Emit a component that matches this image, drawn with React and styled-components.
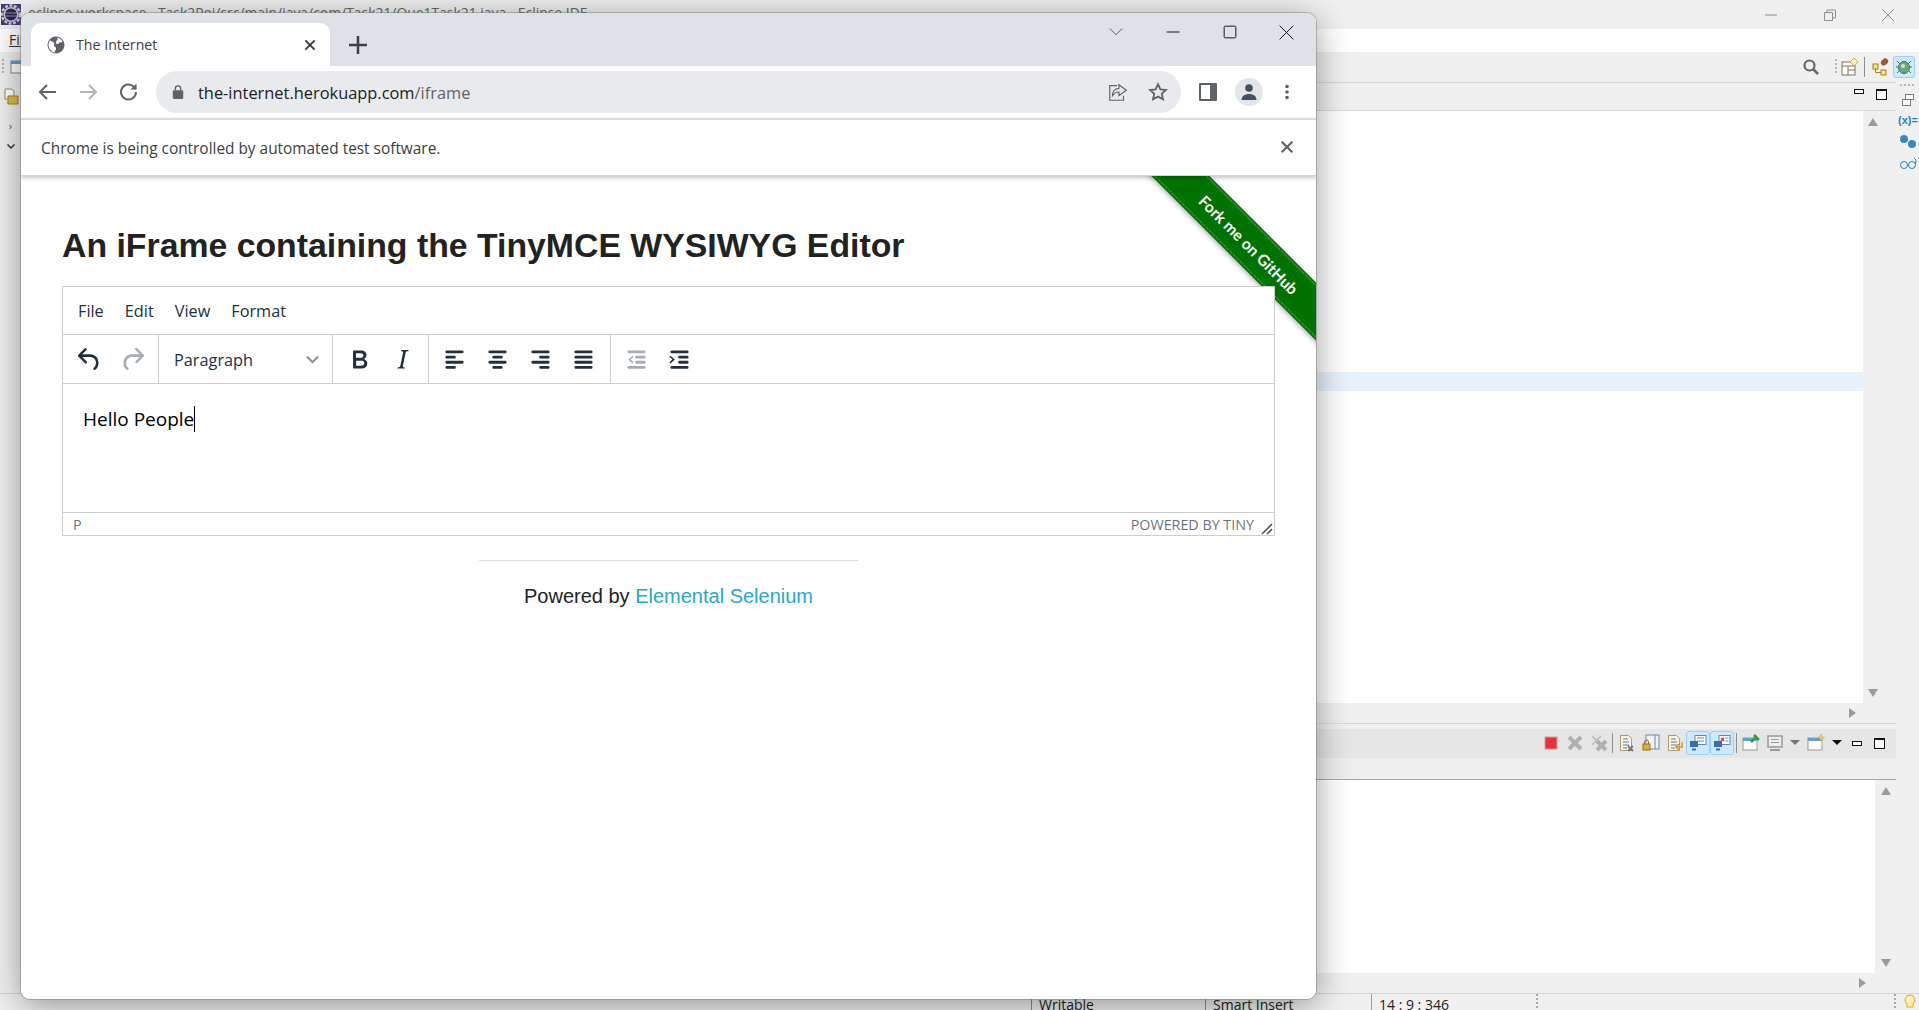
import React from 'react'
import styled, { createGlobalStyle } from 'styled-components'

const GlobalStyle = createGlobalStyle`
  html, body { margin: 0; padding: 0; background: #f0f0f0; }
  body { font-family: "Open Sans", "Noto Sans", sans-serif; overflow: hidden; }
  * { box-sizing: border-box; }
`

const uiFont = `"Open Sans", "Noto Sans", sans-serif`

// ---------- eclipse behind the browser ----------

const Desktop = styled.div`
  position: relative;
  width: 1919px;
  height: 1010px;
  overflow: hidden;
  display: flex;
  flex-direction: column;
  background: #f0f0f0;
`

const EclipseTitle = styled.div`
  height: 29px;
  flex: none;
  display: flex;
  background: #f0f0f0;
  position: relative;
`
const Logo = styled.svg`
  width: 20px;
  height: 21px;
  margin: 4px 0 0 1px;
  flex: none;
`
const TitleText = styled.span`
  margin: 3px 0 0 7px;
  font-size: 13.9px;
  line-height: 20px;
  color: #666;
  white-space: nowrap;
`
const WinControls = styled.div`
  margin-left: auto;
  display: flex;
  align-items: center;
  height: 29px;
  padding-right: 24px;
  gap: 44.5px;
  svg { width: 14px; height: 14px; fill: none; stroke: #8e8e8e; stroke-width: 1; }
`
const EclipseMenu = styled.div`
  height: 23px;
  flex: none;
  background: #fff;
  padding-left: 9px;
  font-size: 14px;
  line-height: 22px;
  color: #333;
  overflow: hidden;
  span { text-decoration: underline; }
`
const EclipseToolbar = styled.div`
  height: 30px;
  flex: none;
  display: flex;
  align-items: center;
  background: #f0f0f0;
  padding: 0 4px 0 2px;
`
const Grip = styled.i`
  display: block;
  width: 2px;
  height: 16px;
  margin-right: ${p => p.$gap || 6}px;
  background: repeating-linear-gradient(to bottom, #b5b5b5 0 2px, transparent 2px 4px);
`
const ToolIcon = styled.svg`
  width: ${p => p.$size || 18}px;
  height: ${p => p.$size || 18}px;
  flex: none;
  display: block;
`
const SearchIcon = styled(ToolIcon)`
  margin-right: 15px;
`
const JavaIcon = styled(ToolIcon)`
  margin-left: 2px;
`
const BulbIcon = styled(ToolIcon)`
  margin-left: 6px;
`
const Spring = styled.div`
  flex: 1;
`
const DebugToggle = styled.div`
  width: 22px;
  height: 22px;
  display: flex;
  align-items: center;
  justify-content: center;
  background: #cde8ff;
  border: 1px solid #99d1ff;
  border-radius: 3px;
  margin-left: 3px;
`
const ToolSep = styled.i`
  display: block;
  width: 1px;
  height: 20px;
  background: #8d8d8d;
  margin: 0 ${p => p.$space || 0}px;
`
const Workbench = styled.div`
  flex: 1;
  min-height: 0;
  display: flex;
`
const LeftTrim = styled.div`
  width: 21px;
  flex: none;
  display: flex;
  flex-direction: column;
  align-items: center;
  padding-top: 6px;
  color: #555;
  font-size: 11px;
  gap: 8px;
`
const TrimCaret = styled.span`
  margin-top: 4px;
`
const TrimChevron = styled.svg`
  width: 10px;
  height: 8px;
  margin-top: 2px;
`
const Panels = styled.div`
  flex: 1;
  min-width: 0;
  display: flex;
  flex-direction: column;
`
const UpperPanel = styled.section`
  height: 642px;
  flex: none;
  display: flex;
  flex-direction: column;
  border-top: 1px solid #d9d9d9;
  border-bottom: 1px solid #d9d9d9;
`
const PanelHead = styled.div`
  height: 28px;
  flex: none;
  display: flex;
  justify-content: flex-end;
  gap: 12px;
  padding: 5px 9px 0 0;
  border-bottom: 1px solid #d9d9d9;
`
const MinBox = styled.i`
  display: block;
  width: 10px;
  height: 5px;
  margin-top: 1px;
  border: 1px solid #111;
  background: #fff;
`
const MaxBox = styled.i`
  display: block;
  width: 11px;
  height: 11px;
  margin-top: 1px;
  border: 1px solid #111;
  border-top-width: 2px;
  background: #fff;
`
const PanelBody = styled.div`
  flex: 1;
  min-height: 0;
  display: flex;
`
const EditorArea = styled.div`
  flex: 1;
  background: #fff;
  padding-top: 261px;
`
const CurrentLine = styled.div`
  height: 19px;
  background: #e8f2fe;
`
const VScroll = styled.div`
  width: ${p => p.$w}px;
  flex: none;
  display: flex;
  flex-direction: column;
  justify-content: space-between;
  align-items: center;
  padding: 7px 0 ${p => p.$pb || 8}px;
  background: #f0f0f0;
  margin-right: ${p => p.$mr || 0}px;
`
const Arrow = styled.i`
  display: block;
  width: 0;
  height: 0;
  border-left: 5px solid transparent;
  border-right: 5px solid transparent;
  ${p => (p.$down ? 'border-top: 8px solid #9b9b9b;' : 'border-bottom: 8px solid #9b9b9b;')}
`
const HScroll = styled.div`
  height: ${p => p.$h}px;
  flex: none;
  display: flex;
  align-items: center;
  justify-content: flex-end;
  padding-right: ${p => p.$pr}px;
  background: #f0f0f0;
  i {
    display: block;
    width: 0;
    height: 0;
    border-top: 5px solid transparent;
    border-bottom: 5px solid transparent;
    border-left: 7px solid #9b9b9b;
  }
`
const LowerPanel = styled.section`
  flex: 1;
  margin-top: 5px;
  display: flex;
  flex-direction: column;
  min-height: 0;
`
const ConsoleBar = styled.div`
  height: 29px;
  flex: none;
  display: flex;
  align-items: center;
  justify-content: flex-end;
  padding: 0 5px 2px 0;
  background: #e6e6e6;
`
const ConsoleCell = styled.div`
  width: ${p => p.$w || 24}px;
  height: 24px;
  flex: none;
  display: flex;
  align-items: center;
  justify-content: center;
  ${p => p.$on && 'background: #cde8ff; border: 1px solid #99d1ff; border-radius: 3px;'}
`
const DropArrow = styled.i`
  display: block;
  width: 0;
  height: 0;
  border-left: 5px solid transparent;
  border-right: 5px solid transparent;
  border-top: 5px solid ${p => p.$color || '#111'};
`
const ConsoleTabs = styled.div`
  height: 22px;
  flex: none;
  background: #eeeeee;
  border-bottom: 1px solid #a8a8a8;
`
const ConsoleBody = styled.div`
  flex: 1;
  min-height: 0;
  display: flex;
`
const RightTrim = styled.div`
  width: 22px;
  flex: none;
  display: flex;
  flex-direction: column;
  align-items: center;
  gap: 5px;
  padding-top: 2px;
  font-size: 11px;
  color: #2a7fc1;
  margin-left: 1px;
  b { font-weight: 600; line-height: 16px; font-family: "Liberation Sans", sans-serif; }
`
const TrimDots = styled.i`
  display: block;
  width: 16px;
  height: 2px;
  margin-bottom: 2px;
  background: repeating-linear-gradient(to right, #b5b5b5 0 2px, transparent 2px 4px);
`
const StatusBar = styled.footer`
  height: 17px;
  flex: none;
  display: flex;
  border-top: 1px solid #d4d4d4;
  font-size: 14px;
  line-height: 22px;
  color: #222;
  overflow: hidden;
  background: #f0f0f0;
`
const StatusCell = styled.div`
  width: ${p => p.$w}px;
  flex: none;
  padding-left: ${p => p.$pl || 7}px;
  border-left: 1px solid ${p => p.$line || 'transparent'};
  white-space: nowrap;
`
const StatusGrip = styled.i`
  display: block;
  width: 2px;
  flex: none;
  margin-left: ${p => p.$ml}px;
  background: repeating-linear-gradient(to bottom, #a8a8a8 0 2px, transparent 2px 4px);
`

// ---------- browser window ----------

const BrowserWindow = styled.div`
  position: absolute;
  left: 21px;
  top: 13px;
  width: 1295px;
  height: 986px;
  display: flex;
  flex-direction: column;
  background: #fff;
  border-radius: 9px;
  overflow: hidden;
  box-shadow: 0 0 0 1px rgba(120, 120, 120, .45), 0 6px 34px rgba(0, 0, 0, .4);
  z-index: 5;
`
const TabStrip = styled.div`
  height: 53px;
  flex: none;
  display: flex;
  background: #dee1e6;
  padding-left: 10px;
`
const Tab = styled.div`
  width: 299px;
  height: 43px;
  margin-top: 10px;
  display: flex;
  align-items: center;
  padding: 0 12px 0 16px;
  background: #fff;
  border-radius: 10px 10px 0 0;
  font-size: 14.2px;
  color: #3c4043;
`
const TabLabel = styled.span`
  margin-left: 11px;
  flex: 1;
`
const Icon = styled.svg`
  width: ${p => p.$size || 24}px;
  height: ${p => p.$size || 24}px;
  display: block;
  flex: none;
`
const NewTab = styled.div`
  width: 34px;
  height: 34px;
  margin: 15px 0 0 11px;
  display: flex;
  align-items: center;
  justify-content: center;
`
const FrameButtons = styled.div`
  margin-left: auto;
  display: flex;
  align-items: center;
  height: 38px;
  padding-right: 22px;
  gap: 42.5px;
`
const Omnibar = styled.div`
  height: 52px;
  flex: none;
  display: flex;
  align-items: center;
  padding: 0 16px 0 15px;
`
const NavButton = styled.div`
  width: 24px;
  height: 24px;
  margin-right: ${p => p.$mr || 16}px;
  display: flex;
  align-items: center;
  justify-content: center;
`
const AddressBar = styled.div`
  width: 1025px;
  height: 42px;
  margin: 0 18px 0 0;
  display: flex;
  align-items: center;
  padding: 0 12px 0 15px;
  background: #e8eaed;
  border-radius: 21px;
  font-size: 16.4px;
  color: #202124;
`
const Url = styled.span`
  margin-left: 13px;
  flex: 1;
  white-space: nowrap;
  em { font-style: normal; color: #5f6368; }
`
const AddressActions = styled.div`
  display: flex;
  gap: 18px;
  align-items: center;
`
const ProfileCircle = styled.div`
  width: 28px;
  height: 28px;
  margin: 0 16px 0 18px;
  display: flex;
  align-items: center;
  justify-content: center;
  border-radius: 50%;
  background: #e3e5e9;
`
const InfoBar = styled.div`
  height: 58px;
  flex: none;
  display: flex;
  align-items: center;
  justify-content: space-between;
  padding: 2px 21px 0 20px;
  border-top: 2px solid #dadce0;
  border-bottom: 1px solid #d5d5d5;
  box-shadow: 0 2px 4px rgba(0, 0, 0, .22);
  font-size: 15.4px;
  color: #3c4043;
  position: relative;
  z-index: 3;
`
const InfoClose = styled.div`
  margin-bottom: 4px;
`
const Page = styled.main`
  position: relative;
  flex: 1;
  min-height: 0;
  overflow: hidden;
  padding: 0 41px;
  background: #fff;
`
const Ribbon = styled.a`
  position: absolute;
  left: 1078px;
  top: 50px;
  width: 300px;
  height: 37px;
  display: flex;
  align-items: center;
  justify-content: center;
  transform: rotate(45deg);
  background: #007200;
  border-top: 1px dotted #5fa85f;
  border-bottom: 1px dotted #5fa85f;
  outline: 2px solid #007200;
  box-shadow: 0 2px 6px rgba(0, 0, 0, .5);
  color: #fff;
  font-family: Lato, sans-serif;
  font-size: 15.6px;
  font-weight: 700;
  white-space: nowrap;
`
const Heading = styled.h3`
  margin: 0;
  padding-top: 48px;
  height: 110px;
  font-family: "Liberation Sans", Arial, sans-serif;
  font-size: 33.8px;
  line-height: 42px;
  font-weight: 700;
  color: #222;
`
const Editor = styled.div`
  position: relative;
  z-index: 1;
  height: 250px;
  display: flex;
  flex-direction: column;
  background: #fff;
  border: 1px solid #ccc;
  font-family: ${uiFont};
`
const MenuBar = styled.div`
  height: 48px;
  flex: none;
  display: flex;
  align-items: center;
  padding: 1px 0 0 15px;
  gap: 21px;
  border-bottom: 1px solid #ccc;
  font-size: 16.3px;
  color: #222f3e;
`
const FormatBar = styled.div`
  height: 49px;
  flex: none;
  display: flex;
  border-bottom: 1px solid #ccc;
`
const ToolGroup = styled.div`
  display: flex;
  align-items: center;
  padding: 0 ${p => p.$pr || 4}px 0 ${p => p.$pl || 5}px;
  border-right: ${p => (p.$last ? '0' : '1px solid #ccc')};
`
const ToolButton = styled.div`
  width: 43px;
  height: 43px;
  display: flex;
  align-items: center;
  justify-content: center;
  svg { fill: ${p => (p.$off ? 'rgba(34, 47, 62, .4)' : '#222f3e')}; }
`
const SelectBox = styled.div`
  width: 174px;
  height: 100%;
  display: flex;
  align-items: center;
  justify-content: space-between;
  padding: 2px 12px 0 15px;
  border-right: 1px solid #ccc;
  font-size: 16.3px;
  color: #222f3e;
  svg { fill: rgba(34, 47, 62, .55); }
`
const Content = styled.div`
  flex: 1;
  display: flex;
  align-items: flex-start;
  padding: 19px 0 0 20px;
  font-size: 19px;
  line-height: 32px;
  color: #000;
`
const Caret = styled.i`
  display: block;
  width: 1px;
  height: 26px;
  margin-top: 3px;
  background: #000;
`
const EditorStatus = styled.div`
  height: 23px;
  flex: none;
  display: flex;
  align-items: center;
  padding: 0 1px 0 10px;
  border-top: 1px solid #ccc;
  font-size: 14.3px;
  color: rgba(34, 47, 62, .7);
`
const Branding = styled.span`
  margin-left: auto;
  margin-right: 5px;
`
const ResizeHandle = styled.svg`
  width: 14px;
  height: 14px;
  align-self: flex-end;
  flex: none;
`
const PageFooter = styled.div`
  width: 379px;
  margin: 24px auto 0;
  padding-top: 22px;
  border-top: 1px solid #ddd;
  text-align: center;
  font-family: "Liberation Sans", Arial, sans-serif;
  font-size: 20px;
  line-height: 26px;
  color: #222;
  a { color: #2ba6cb; text-decoration: none; }
`

const alignLines = {
  left: [[5, 19], [5, 13], [5, 19], [5, 13]],
  center: [[5, 19], [8, 16], [5, 19], [8, 16]],
  right: [[5, 19], [11, 19], [5, 19], [11, 19]],
  justify: [[5, 19], [5, 19], [5, 19], [5, 19]],
}

const AlignIcon = ({ kind }) => (
  <Icon $size={31} viewBox="0 0 24 24">
    {alignLines[kind].map(([a, b], i) => (
      <rect key={i} x={a} y={5 + i * 4} width={b - a} height="2.2" rx="1" />
    ))}
  </Icon>
)

const IndentIcon = ({ out }) => (
  <Icon $size={31} viewBox="0 0 24 24">
    <rect x="5" y="5" width="14" height="2.2" rx="1" />
    <rect x="11" y="9" width="8" height="2.2" rx="1" />
    <rect x="11" y="13" width="8" height="2.2" rx="1" />
    <rect x="5" y="17" width="14" height="2.2" rx="1" />
    {out
      ? <path d="M9 9 5.6 12 9 15l.8-.9L7.5 12l2.300-2.100z" />
      : <path d="M5 9 8.4 12 5 15l-.8-.9L6.5 12 4.200 9.900z" />}
  </Icon>
)

const StrokeIcon = ({ size = 24, color = '#5f6368', w = 2, children }) => (
  <Icon $size={size} viewBox="0 0 24 24" fill="none" stroke={color} strokeWidth={w}>{children}</Icon>
)

const GrayCross = ({ double }) => (
  <ToolIcon viewBox="0 0 18 18">
    {double && <path d="M2 2 11 11M11 2 2 11" stroke="#c4c4c4" strokeWidth="2" fill="none" />}
    <path d={double ? 'M7 7 16 16M16 7 7 16' : 'M3 3 15 15M15 3 3 15'} stroke="#b0b0b0" strokeWidth="4" fill="none" />
  </ToolIcon>
)

const DocIcon = ({ children }) => (
  <ToolIcon viewBox="0 0 18 18">
    <path d="M2.5 1.5h8l3 3v12h-11z" fill="#fbf6e6" stroke="#a79a74" />
    <path d="M5 5h5M5 8h6M5 11h6M5 14h4" stroke="#5b79a8" fill="none" />
    {children}
  </ToolIcon>
)

const MonitorIcon = ({ red }) => (
  <ToolIcon viewBox="0 0 18 18">
    <rect x="6" y="1.5" width="11" height="9" fill="#fff" stroke="#5a86b8" />
    {red
      ? <path d="M8 4l3 3M11 4 8 7" stroke="#e03030" strokeWidth="1.6" fill="none" />
      : <path d="M8 4h7M8 7h7" stroke="#5a86b8" fill="none" />}
    {red && <path d="M12.5 4h3M12.5 7h3" stroke="#5a86b8" fill="none" />}
    <rect x="1" y="7" width="8" height="6" fill="#3a6ea5" />
    <path d="M3 15.5h4" stroke="#3a6ea5" strokeWidth="2" />
  </ToolIcon>
)

const WindowIcon = ({ children }) => (
  <ToolIcon viewBox="0 0 18 18">
    <rect x="1" y="4" width="14" height="12" fill="#fff" stroke="#9a9a8a" />
    <rect x="1" y="4" width="14" height="3" fill="#6a9bd1" />
    {children}
  </ToolIcon>
)

export default function App() {
  return (
    <Desktop>
      <GlobalStyle />

      <EclipseTitle>
        <Logo viewBox="0 0 20 21">
          <rect width="20" height="21" fill="#4a3a78" />
          <circle cx="10" cy="10.5" r="9" fill="none" stroke="#c8c8d0" strokeWidth="2.5" strokeDasharray="3 1.5" />
          <circle cx="10" cy="10.5" r="7.5" fill="#c8c8d0" />
          <circle cx="10" cy="10.5" r="6" fill="#2b2550" />
          <path d="M4 9h12M4 12h12" stroke="#8e86b5" />
        </Logo>
        <TitleText>eclipse-workspace - Task2Poj/src/main/java/com/Task21/Que1Task21.java - Eclipse IDE</TitleText>
        <WinControls>
          <svg viewBox="0 0 14 14"><path d="M1 7h12" /></svg>
          <svg viewBox="0 0 14 14"><path d="M1.5 4.5h8v8h-8zM4 4.5V2h8.5v8H9.5" /></svg>
          <svg viewBox="0 0 14 14"><path d="M1 1l12 12M13 1 1 13" /></svg>
        </WinControls>
      </EclipseTitle>

      <EclipseMenu><span>File</span></EclipseMenu>

      <EclipseToolbar>
        <Grip />
        <ToolIcon $size={14} viewBox="0 0 14 14">
          <rect x="1" y="1" width="12" height="12" fill="#fff" stroke="#7a8aa0" />
          <rect x="1" y="1" width="12" height="3" fill="#6a9bd1" />
        </ToolIcon>
        <Spring />
        <SearchIcon viewBox="0 0 18 18">
          <circle cx="7.5" cy="7.5" r="5" fill="none" stroke="#666" strokeWidth="2.2" />
          <path d="M11.5 11.5 16 16" stroke="#666" strokeWidth="2.5" />
        </SearchIcon>
        <Grip $gap={4} />
        <ToolIcon viewBox="0 0 18 18">
          <rect x="1" y="4" width="13" height="13" fill="#fff" stroke="#7f7456" />
          <path d="M1 8h13M7 8v9M7 12h7" stroke="#7f7456" fill="none" />
          <path d="M13 0l4 4-4 4-4-4z" fill="#fff4c8" stroke="#d6a72c" />
        </ToolIcon>
        <ToolSep $space={5} />
        <JavaIcon viewBox="0 0 18 18">
          <rect x="1" y="6" width="5" height="5" fill="#ffe27a" stroke="#a87f20" />
          <rect x="9" y="12" width="5" height="5" fill="#ffe27a" stroke="#a87f20" />
          <path d="M3.5 11v3.5H9" stroke="#a87f20" fill="none" />
          <ellipse cx="12.5" cy="4" rx="4" ry="3" fill="#9a5a34" transform="rotate(-40 12.5 4)" />
        </JavaIcon>
        <DebugToggle>
          <ToolIcon viewBox="0 0 18 18">
            <path d="M2 3l3 3M16 3l-3 3M1 9h3M14 9h3M2 15l3-3M16 15l-3-3" stroke="#4f6d3a" fill="none" />
            <ellipse cx="9" cy="9.5" rx="5.5" ry="6" fill="#6ea77a" stroke="#2f7a78" />
            <circle cx="8" cy="8" r="2" fill="#cfe8c4" />
          </ToolIcon>
        </DebugToggle>
      </EclipseToolbar>

      <Workbench>
        <LeftTrim>
          <ToolIcon viewBox="0 0 18 18">
            <path d="M3 1h7l2 2v8H3z" fill="#fff" stroke="#a08b5c" />
            <path d="M6 8h10v8H6z" fill="#e4b84e" stroke="#a37c20" />
          </ToolIcon>
          <TrimCaret>›</TrimCaret>
          <TrimChevron viewBox="0 0 10 8">
            <path d="M1.5 1.5 5 5l3.5-3.5" fill="none" stroke="#333" strokeWidth="1.5" />
          </TrimChevron>
        </LeftTrim>

        <Panels>
          <UpperPanel>
            <PanelHead><MinBox /><MaxBox /></PanelHead>
            <PanelBody>
              <EditorArea><CurrentLine /></EditorArea>
              <VScroll $w={20} $mr={13} $pb={6}><Arrow /><Arrow $down /></VScroll>
            </PanelBody>
            <HScroll $h={20} $pr={40}><i /></HScroll>
          </UpperPanel>

          <LowerPanel>
            <ConsoleBar>
              <ConsoleCell>
                <ToolIcon $size={14} viewBox="0 0 14 14"><rect x="1" y="1" width="12" height="12" fill="#e8303a" stroke="#c9a0a0" /></ToolIcon>
              </ConsoleCell>
              <ConsoleCell><GrayCross /></ConsoleCell>
              <ConsoleCell $w={23}><GrayCross double /></ConsoleCell>
              <ConsoleCell $w={5}><ToolSep /></ConsoleCell>
              <ConsoleCell><DocIcon><path d="M10 12l5 5M15 12l-5 5" stroke="#777" strokeWidth="1.8" /></DocIcon></ConsoleCell>
              <ConsoleCell>
                <ToolIcon viewBox="0 0 18 18">
                  <rect x="4" y="1" width="13" height="14" fill="#eef3f8" stroke="#6f88a8" />
                  <path d="M13 1v14" stroke="#6f88a8" />
                  <rect x="1" y="10" width="7" height="6" fill="#e0b03a" stroke="#96701a" />
                  <path d="M2.5 10V8a2 2 0 0 1 4 0v2" fill="none" stroke="#96701a" />
                </ToolIcon>
              </ConsoleCell>
              <ConsoleCell $w={23}><DocIcon><path d="M16 8v5h-5M13 10l-3 3 3 3" stroke="#d49a20" strokeWidth="1.5" fill="none" /></DocIcon></ConsoleCell>
              <ConsoleCell $on><MonitorIcon /></ConsoleCell>
              <ConsoleCell $on><MonitorIcon red /></ConsoleCell>
              <ConsoleCell $w={5}><ToolSep /></ConsoleCell>
              <ConsoleCell><WindowIcon><path d="M9 8l6-6M12 1l5 5" stroke="#2f9a3e" strokeWidth="2.5" fill="none" /></WindowIcon></ConsoleCell>
              <ConsoleCell>
                <ToolIcon viewBox="0 0 18 18">
                  <rect x="2" y="2" width="14" height="11" fill="#eee" stroke="#999" strokeWidth="1.5" />
                  <path d="M5 5.5h8M5 8.5h8" stroke="#999" />
                  <path d="M4 16h10" stroke="#999" strokeWidth="2" />
                </ToolIcon>
              </ConsoleCell>
              <ConsoleCell $w={16}><DropArrow $color="#777" /></ConsoleCell>
              <ConsoleCell $w={26}><WindowIcon><path d="M14 0l1 2.5 2.5 1-2.5 1-1 2.5-1-2.5-2.5-1 2.5-1z" fill="#f4d060" stroke="#c89a20" strokeWidth=".5" /></WindowIcon></ConsoleCell>
              <ConsoleCell $w={16}><DropArrow /></ConsoleCell>
              <ConsoleCell $w={23}><MinBox /></ConsoleCell>
              <ConsoleCell $w={23}><MaxBox /></ConsoleCell>
            </ConsoleBar>
            <ConsoleTabs />
            <ConsoleBody>
              <EditorArea />
              <VScroll $w={21} $mr={0} $pb={6}><Arrow /><Arrow $down /></VScroll>
            </ConsoleBody>
            <HScroll $h={20} $pr={30}><i /></HScroll>
          </LowerPanel>
        </Panels>

        <RightTrim>
          <TrimDots />
          <ToolIcon $size={14} viewBox="0 0 14 14">
            <rect x="4.5" y="1.5" width="8" height="5" fill="#fff" stroke="#85786a" />
            <rect x="1.5" y="6.5" width="8" height="6" fill="#fff" stroke="#85786a" />
          </ToolIcon>
          <b>(x)=</b>
          <ToolIcon viewBox="0 0 18 18">
            <circle cx="5" cy="6" r="4" fill="#3a85c6" />
            <circle cx="13" cy="11" r="4" fill="#3a85c6" />
          </ToolIcon>
          <ToolIcon viewBox="0 0 18 18">
            <circle cx="5" cy="9" r="3.5" fill="none" stroke="#2a7fc1" />
            <circle cx="13" cy="9" r="3.5" fill="none" stroke="#2a7fc1" />
            <path d="M8.5 9h1M16.5 8 17 4 15 2" fill="none" stroke="#2a7fc1" />
          </ToolIcon>
        </RightTrim>
      </Workbench>

      <StatusBar>
        <StatusCell $w={1031} />
        <StatusCell $w={174} $line="#8c8c8c">Writable</StatusCell>
        <StatusCell $w={166} $line="#8c8c8c">Smart Insert</StatusCell>
        <StatusCell $w={165} $line="#a0a0a0">14 : 9 : 346</StatusCell>
        <StatusGrip $ml={0} />
        <StatusGrip $ml={356} />
        <BulbIcon $size={16} viewBox="0 0 16 16">
          <path d="M8 1a5 5 0 0 0-3 9v3h6v-3a5 5 0 0 0-3-9z" fill="#fdf0b0" stroke="#e0a820" />
        </BulbIcon>
      </StatusBar>

      <BrowserWindow>
        <TabStrip>
          <Tab>
            <Icon $size={18} viewBox="0 0 18 18">
              <circle cx="9" cy="9" r="8.5" fill="#5f6368" />
              <path d="M3 4.5c2 .5 3 1 4 2.5s-1 2 0 3 2 1 2 2.5-1 2.5-1.5 4C5 16 2 13 1.5 10 1.3 8 2 6 3 4.5zM10.5 1.5c2 .5 4 2 5 4-1 1-2 .5-3 1s-1 2-2.500 1.500-1-2-.5-3 1.500-1.500 1-3.500z" fill="#fff" />
            </Icon>
            <TabLabel>The Internet</TabLabel>
            <StrokeIcon size={16} color="#3c4043" w={3}><path d="M5 5l14 14M19 5 5 19" /></StrokeIcon>
          </Tab>
          <NewTab>
            <StrokeIcon size={24} color="#3c4043" w={2.5}><path d="M12 3v18M3 12h18" /></StrokeIcon>
          </NewTab>
          <FrameButtons>
            <StrokeIcon size={16} color="#333" w={1.2}><path d="M3 7l9 9 9-9" /></StrokeIcon>
            <StrokeIcon size={14} color="#111" w={1.7}><path d="M1 12h22" /></StrokeIcon>
            <StrokeIcon size={14} color="#111" w={1.7}><rect x="2" y="2" width="20" height="20" rx="2" /></StrokeIcon>
            <StrokeIcon size={15} color="#111" w={1.6}><path d="M1 1l22 22M23 1 1 23" /></StrokeIcon>
          </FrameButtons>
        </TabStrip>

        <Omnibar>
          <NavButton><StrokeIcon><path d="M20 12H5M11 5l-7 7 7 7" /></StrokeIcon></NavButton>
          <NavButton $mr={17}><StrokeIcon color="#b3b5b8"><path d="M4 12h15M13 5l7 7-7 7" /></StrokeIcon></NavButton>
          <NavButton $mr={15}>
            <StrokeIcon>
              <path d="M19 12a7.5 7.5 0 1 1-2.2-5.3L19 9" />
              <path d="M19.5 3.5v6h-6" fill="#5f6368" stroke="none" />
            </StrokeIcon>
          </NavButton>
          <AddressBar>
            <Icon $size={14} viewBox="0 0 14 16">
              <rect x="1" y="6" width="12" height="10" rx="1.5" fill="#5f6368" />
              <path d="M4 6V4a3 3 0 0 1 6 0v2" fill="none" stroke="#5f6368" strokeWidth="1.6" />
            </Icon>
            <Url>the-internet.herokuapp.com<em>/iframe</em></Url>
            <AddressActions>
              <StrokeIcon size={22} w={1.3}>
                <path d="M11 5H3v16h15v-5" />
                <path d="M13 4v4C8 8 6 12 6 16c2-3 4-4 7-4v4l8-6z" />
              </StrokeIcon>
              <StrokeIcon size={22} w={2}>
                <path d="M12 3.5l2.6 5.6 6 .7-4.500 4.100 1.300 6L12 17l-5.400 2.900 1.300-6L3.400 9.800l6-.7z" />
              </StrokeIcon>
            </AddressActions>
          </AddressBar>
          <Icon $size={18} viewBox="0 0 18 18">
            <rect width="18" height="18" rx="1" fill="#5f6368" />
            <rect x="2" y="2" width="9" height="14" fill="#fff" />
          </Icon>
          <ProfileCircle>
            <Icon $size={18} viewBox="0 0 18 18">
              <circle cx="9" cy="5" r="3.8" fill="#45505e" />
              <path d="M1.5 17c0-4 3.5-6 7.5-6s7.5 2 7.5 6z" fill="#45505e" />
            </Icon>
          </ProfileCircle>
          <Icon $size={16} viewBox="0 0 16 16" fill="#5f6368">
            <circle cx="8" cy="2.5" r="1.8" />
            <circle cx="8" cy="8" r="1.8" />
            <circle cx="8" cy="13.5" r="1.8" />
          </Icon>
        </Omnibar>

        <InfoBar>
          <span>Chrome is being controlled by automated test software.</span>
          <InfoClose>
            <StrokeIcon size={16} w={3.2}><path d="M4 4l16 16M20 4 4 20" /></StrokeIcon>
          </InfoClose>
        </InfoBar>

        <Page>
          <Ribbon>Fork me on GitHub</Ribbon>
          <Heading>An iFrame containing the TinyMCE WYSIWYG Editor</Heading>
          <Editor>
            <MenuBar>
              <span>File</span>
              <span>Edit</span>
              <span>View</span>
              <span>Format</span>
            </MenuBar>
            <FormatBar>
              <ToolGroup>
                <ToolButton>
                  <Icon $size={31} viewBox="0 0 24 24"><path d="M6.4 8H12c3.7 0 6.2 2 6.8 5.1.6 2.7-.4 5.6-2.3 6.8a1 1 0 0 1-1-1.8c1.1-.6 1.8-2.7 1.4-4.6-.5-2.1-2.1-3.5-4.9-3.5H6.4l3.3 3.3a1 1 0 1 1-1.4 1.4l-5-5a1 1 0 0 1 0-1.4l5-5a1 1 0 0 1 1.4 1.4L6.4 8z" /></Icon>
                </ToolButton>
                <ToolButton $off>
                  <Icon $size={31} viewBox="0 0 24 24"><path d="M17.6 10H12c-2.8 0-4.4 1.4-4.9 3.5-.4 2 .3 4 1.4 4.6a1 1 0 1 1-1 1.8c-2-1.2-2.9-4.1-2.3-6.8.6-3 3-5.1 6.8-5.1h5.6l-3.3-3.3a1 1 0 1 1 1.4-1.4l5 5a1 1 0 0 1 0 1.4l-5 5a1 1 0 0 1-1.4-1.4l3.3-3.3z" /></Icon>
                </ToolButton>
              </ToolGroup>
              <SelectBox>
                <span>Paragraph</span>
                <Icon $size={15} viewBox="0 0 10 10"><path d="M5 7 .8 2.8l.9-.9L5 5.2l3.3-3.3.9.9z" /></Icon>
              </SelectBox>
              <ToolGroup>
                <ToolButton>
                  <Icon $size={31} viewBox="0 0 24 24"><path d="M7.8 19c-.3 0-.5 0-.6-.2l-.2-.5V5.7c0-.2 0-.4.2-.5l.6-.2h5c1.5 0 2.7.3 3.5 1 .7.6 1.1 1.4 1.1 2.500a3 3 0 0 1-.6 1.900c-.4.6-1 1-1.600 1.200.4.100.9.300 1.300.6s.8.700 1 1.200c.4.400.5 1 .5 1.600 0 1.300-.4 2.300-1.300 3-.8.7-2.100 1-3.800 1H7.8zm5-8.300c.6 0 1.200-.1 1.600-.5.400-.3.600-.7.600-1.300 0-1.100-.8-1.700-2.300-1.700H9.300v3.500h3.400zm.5 6c.7 0 1.300-.1 1.700-.4.400-.4.600-.9.600-1.500s-.2-1-.7-1.400c-.4-.3-1-.4-2-.4H9.400v3.800h4z" /></Icon>
                </ToolButton>
                <ToolButton>
                  <Icon $size={31} viewBox="0 0 24 24"><path d="M16.7 4.7l-.1.9h-.3c-.6 0-1 0-1.400.3-.3.300-.4.600-.5 1.100l-2.100 9.800v.6c0 .5.400.8 1.400.8h.2l-.2.8H8l.2-.8h.2c1.100 0 1.800-.5 2-1.500l2-9.800.1-.5c0-.6-.4-.8-1.400-.8h-.3l.2-.9h5.800z" /></Icon>
                </ToolButton>
              </ToolGroup>
              <ToolGroup $pl={4} $pr={5}>
                <ToolButton><AlignIcon kind="left" /></ToolButton>
                <ToolButton><AlignIcon kind="center" /></ToolButton>
                <ToolButton><AlignIcon kind="right" /></ToolButton>
                <ToolButton><AlignIcon kind="justify" /></ToolButton>
              </ToolGroup>
              <ToolGroup $last $pl={4}>
                <ToolButton $off><IndentIcon out /></ToolButton>
                <ToolButton><IndentIcon /></ToolButton>
              </ToolGroup>
            </FormatBar>
            <Content>
              <span>Hello People</span>
              <Caret />
            </Content>
            <EditorStatus>
              <span>P</span>
              <Branding>POWERED BY TINY</Branding>
              <ResizeHandle viewBox="0 0 14 14">
                <path d="M13 3 3 13M13 8l-5 5" stroke="#4b5563" strokeWidth="1.6" fill="none" />
              </ResizeHandle>
            </EditorStatus>
          </Editor>
          <PageFooter>
            Powered by <a>Elemental Selenium</a>
          </PageFooter>
        </Page>
      </BrowserWindow>
    </Desktop>
  )
}
